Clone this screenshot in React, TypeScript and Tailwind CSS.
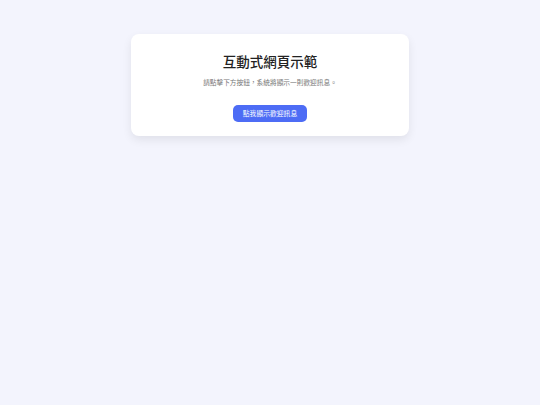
export default function App() {
  return (
    <div className="min-h-screen bg-[#f3f4fd] pt-[34px]" style={{ fontFamily: '"Noto Sans CJK TC", "Noto Sans", sans-serif' }}>
      <div className="mx-auto w-[278px] rounded-[8px] bg-white px-4 pt-[19px] pb-[14px] text-center shadow-[0_4px_10px_rgba(0,0,0,0.08)]">
        <h1 className="text-[13.5px] leading-[16px] font-medium text-[#222]">互動式網頁示範</h1>
        <p className="mt-[8px] text-[6.7px] leading-[10px] text-[#777]">請點擊下方按鈕，系統將顯示一則歡迎訊息。</p>
        <button className="mt-[18px] h-[17px] w-[74px] rounded-[5px] bg-[#4d6cf5] text-[6.8px] text-white">
          點我顯示歡迎訊息
        </button>
      </div>
    </div>
  );
}
